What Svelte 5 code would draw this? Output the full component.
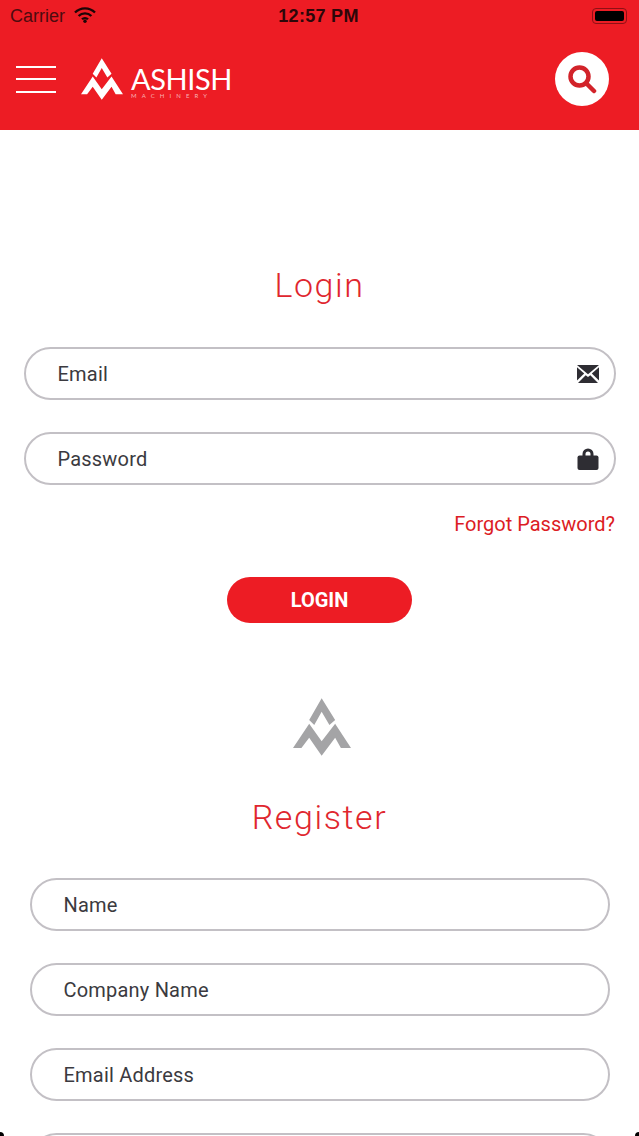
<script>
  const loginFields = [
    { label: 'Email', icon: 'mail' },
    { label: 'Password', icon: 'lock' }
  ];
  const registerFields = ['Name', 'Company Name', 'Email Address', ''];
</script>

{#snippet logo(cls)}
  <svg class={cls} viewBox="0 0 172 170" aria-hidden="true">
    <path d="M85 0 125 64 108 79 85 40 63 79 48 64Z" />
    <path d="M0 147 48 75 85 127 125 75 172 147H142L125 117 85 170 48 117 25 147Z" />
  </svg>
{/snippet}

<div class="screen">
  <header>
    <div class="status">
      <div class="carrier">
        <span>Carrier</span>
        <svg class="wifi" viewBox="0 0 22 16" aria-hidden="true">
          <path d="M1 5.5a14 14 0 0 1 20 0" />
          <path d="M4.6 9a9 9 0 0 1 12.8 0" />
          <path d="M8 12.3a4.2 4.2 0 0 1 6 0" />
          <circle class="dot" cx="11" cy="14.3" r="1.7" />
        </svg>
      </div>
      <span class="time">12:57 PM</span>
      <div class="battery"><i></i></div>
    </div>
    <div class="nav">
      <button class="menu" aria-label="Menu"><i></i><i></i><i></i></button>
      {@render logo('brand-mark')}
      <div class="brand">
        <span class="brand-name">ASHISH</span>
        <span class="brand-sub">MACHINERY</span>
      </div>
      <button class="search" aria-label="Search">
        <svg viewBox="0 0 30 30" aria-hidden="true">
          <circle cx="12.5" cy="12.5" r="9" />
          <path d="M19.5 19.5 27 27" />
        </svg>
      </button>
    </div>
  </header>

  <main>
    <h1 class="login-title">Login</h1>
    <div class="login-fields">
      {#each loginFields as field}
        <div class="field">
          <span>{field.label}</span>
          {#if field.icon === 'mail'}
            <svg class="icon" viewBox="0 0 22 18" aria-hidden="true">
              <path d="M0 0H22L11 9.2Z" />
              <path d="M0 2.2V15.4L7.2 8.4Z" />
              <path d="M22 2.2V15.4L14.8 8.4Z" />
              <path d="M1 18H21L13.3 10.2 11 12 8.7 10.2Z" />
            </svg>
          {:else}
            <svg class="icon" viewBox="0 0 21 22" aria-hidden="true">
              <path d="M5 8V6a5.5 5.5 0 0 1 11 0v2h-3V6a2.5 2.5 0 0 0-5 0v2Z" />
              <rect y="7.5" width="21" height="14.5" rx="2" />
            </svg>
          {/if}
        </div>
      {/each}
    </div>
    <a class="forgot" href="#forgot">Forgot Password?</a>
    <button class="login-btn">LOGIN</button>
    {@render logo('grey-mark')}
    <h2>Register</h2>
    <div class="register-fields">
      {#each registerFields as label}
        <div class="field"><span>{label}</span></div>
      {/each}
    </div>
  </main>

  <div class="corner left"></div>
  <div class="corner right"></div>
</div>

<style>
  :global(body) {
    background: #fff;
  }

  .screen {
    position: relative;
    width: 639px;
    height: 1136px;
    overflow: hidden;
    background: #fff;
    font-family: Roboto, sans-serif;
    color: #3b3a40;
  }

  header {
    height: 130px;
    background: #ed1c24;
  }

  .status {
    height: 32px;
    display: grid;
    grid-template-columns: 1fr auto 1fr;
    align-items: center;
    padding: 0 12px 0 10px;
    color: #3a0a0c;
  }

  .carrier {
    display: flex;
    align-items: center;
    gap: 9px;
    font-family: "Liberation Sans", sans-serif;
    font-size: 18px;
    color: #4d0b0f;
  }

  .wifi {
    width: 22px;
    height: 16px;
    margin-top: -3px;
  }

  .wifi path {
    fill: none;
    stroke: #1c0506;
    stroke-width: 2.3;
  }

  .wifi .dot {
    fill: #1c0506;
  }

  .time {
    font-family: "Liberation Sans", sans-serif;
    font-size: 18px;
    font-weight: 700;
    letter-spacing: 0.3px;
    color: #2c0709;
  }

  .battery {
    justify-self: end;
    width: 35px;
    height: 16px;
    padding: 2px;
    box-sizing: border-box;
    border: 1px solid #8e1015;
    border-radius: 4px;
  }

  .battery i {
    display: block;
    height: 100%;
    background: #000;
    border-radius: 2px;
  }

  .nav {
    height: 98px;
    display: flex;
    align-items: center;
    padding: 0 30px 4px 16px;
    box-sizing: border-box;
  }

  .menu {
    width: 40px;
    height: 27px;
    padding: 0;
    border: 0;
    background: none;
    display: flex;
    flex-direction: column;
    justify-content: space-between;
  }

  .menu i {
    height: 2px;
    background: #fff;
  }

  .brand-mark {
    width: 42px;
    height: 42px;
    margin: 0 0 0 25px;
    fill: #fff;
  }

  .brand {
    display: flex;
    flex-direction: column;
    margin-left: 8px;
    color: #fff;
    padding-top: 6px;
  }

  .brand-name {
    font-family: Lato, sans-serif;
    font-size: 29px;
    font-weight: 400;
    line-height: 26px;
    letter-spacing: -0.4px;
  }

  .brand-sub {
    font-family: Lato, sans-serif;
    font-size: 6px;
    line-height: 7px;
    letter-spacing: 5.1px;
    color: #f8b4b6;
  }

  .search {
    width: 54px;
    height: 54px;
    margin-left: auto;
    padding: 0;
    border: 0;
    border-radius: 50%;
    background: #fff;
    display: grid;
    place-items: center;
  }

  .search svg {
    width: 30px;
    height: 30px;
    fill: none;
    stroke: #d2232a;
    stroke-width: 4.5;
    stroke-linecap: round;
  }

  main {
    display: flex;
    flex-direction: column;
    align-items: center;
  }

  h1,
  h2 {
    margin: 0;
    font-size: 34px;
    line-height: 40px;
    font-weight: 300;
    letter-spacing: 1.6px;
    color: #e0262e;
  }

  .login-title {
    margin-top: 135px;
  }

  .login-fields,
  .register-fields {
    display: flex;
    flex-direction: column;
  }

  .login-fields {
    width: 592px;
    margin-top: 42px;
    gap: 32px;
  }

  .register-fields {
    width: 580px;
    margin-top: 41px;
    gap: 32px;
  }

  .field {
    height: 53px;
    flex: none;
    box-sizing: border-box;
    display: flex;
    align-items: center;
    justify-content: space-between;
    padding: 0 15px 0 32px;
    border: 2px solid #c3c0c5;
    border-radius: 27px;
    font-size: 20px;
    letter-spacing: 0.2px;
  }

  .icon {
    width: 22px;
    height: 22px;
    fill: #2e2d33;
  }

  .forgot {
    align-self: flex-end;
    margin: 27px 24px 0 0;
    font-size: 20px;
    line-height: 24px;
    color: #dc1c24;
    text-decoration: none;
  }

  .login-btn {
    width: 185px;
    height: 46px;
    margin-top: 41px;
    border: 0;
    border-radius: 23px;
    background: #ed1c24;
    color: #fff;
    font-family: Roboto, sans-serif;
    font-size: 20px;
    font-weight: 700;
  }

  .grey-mark {
    width: 58px;
    height: 58px;
    margin: 75px 0 0 5px;
    fill: #a4a4a6;
  }

  h2 {
    margin-top: 41px;
  }

  .corner {
    position: absolute;
    bottom: 0;
    width: 4px;
    height: 4px;
    background: #000;
  }

  .corner.left {
    left: 0;
    border-top-right-radius: 4px;
  }

  .corner.right {
    right: 0;
    border-top-left-radius: 4px;
  }
</style>
